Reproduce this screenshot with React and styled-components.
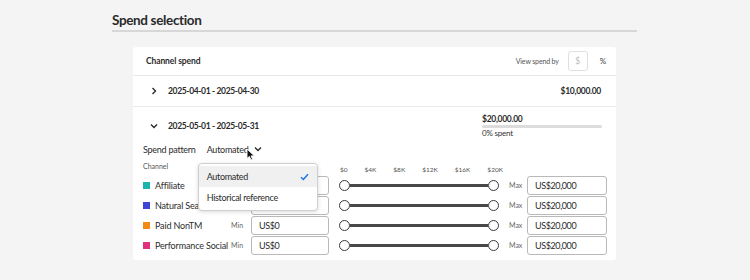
import React from "react";
import styled, { createGlobalStyle } from "styled-components";

const Global = createGlobalStyle`
  html, body { margin: 0; padding: 0; }
  body {
    background: #f4f4f4;
    font-family: Lato, "Open Sans", sans-serif;
    color: #2c2c2c;
    width: 750px;
    height: 280px;
    overflow: hidden;
  }
`;

const Page = styled.div`
  padding: 11px 113px 0 112px;
`;

const Title = styled.h2`
  margin: 0;
  font-size: 13.5px;
  letter-spacing: -0.35px;
  font-weight: 700;
  line-height: 18px;
  padding-bottom: 1px;
  border-bottom: 2px solid #d7d7d7;
  color: #2a2a2a;
`;

const Card = styled.div`
  margin: 15px 21px 0 21px;
  background: #fff;
  border-radius: 3px;
  position: relative;
`;

const CardHeader = styled.div`
  height: 28px;
  display: flex;
  align-items: center;
  padding: 0 10px 0 13px;
  border-bottom: 1px solid #e9e9e9;
`;

const HeaderTitle = styled.div`
  flex: 1;
  font-size: 8.5px;
  letter-spacing: -0.1px;
  font-weight: 700;
`;

const ViewBy = styled.div`
  display: flex;
  align-items: center;
  gap: 9px;
  font-size: 7px;
  letter-spacing: -0.15px;
  color: #555;
`;

const UnitBox = styled.div`
  width: 20px;
  height: 20px;
  box-sizing: border-box;
  border: 1px solid #e0e0e0;
  border-radius: 3px;
  display: flex;
  align-items: center;
  justify-content: center;
  color: #bbb;
  font-size: 8.5px;
`;

const Pct = styled.span`
  margin-left: 3px;
  font-size: 8px;
  color: #444;
`;

const PeriodRow = styled.div`
  height: 30px;
  display: flex;
  align-items: center;
  padding: 0 15px 0 16px;
  border-bottom: 1px solid #e9e9e9;
`;

const Chevron = styled.span`
  width: 10px;
  display: inline-flex;
  align-items: center;
  justify-content: center;
  margin-right: 9px;
`;

const DateText = styled.div`
  flex: 1;
  font-size: 8.5px;
  letter-spacing: -0.35px;
  font-weight: 700;
`;

const Amount = styled.div`
  font-size: 8.5px;
  letter-spacing: -0.3px;
  font-weight: 700;
`;

const Expanded = styled.div`
  padding: 6px 9px 5px 10px;
`;

const ExpandedTop = styled.div`
  display: flex;
  align-items: center;
  padding-left: 6px;
`;

const Budget = styled.div`
  width: 120px;
  margin-right: 5px;
  display: flex;
  flex-direction: column;
`;

const BudgetValue = styled.div`
  font-size: 8.5px;
  letter-spacing: -0.3px;
  font-weight: 700;
  line-height: 12px;
`;

const Bar = styled.div`
  height: 3px;
  background: #dcdcdc;
  border-radius: 2px;
`;

const Spent = styled.div`
  font-size: 8px;
  letter-spacing: -0.2px;
  line-height: 11px;
  color: #333;
`;

const PatternRow = styled.div`
  display: flex;
  align-items: center;
  height: 20px;
  font-size: 9px;
  letter-spacing: -0.25px;
  gap: 11px;
`;

const Picker = styled.div`
  position: relative;
  display: flex;
  align-items: center;
  gap: 5px;
  height: 20px;
`;

const Menu = styled.div`
  position: absolute;
  top: 24px;
  left: -9px;
  width: 118px;
  padding: 2px 0;
  background: #fff;
  border: 1px solid #cfcfcf;
  border-radius: 4px;
  box-shadow: 0 1px 4px rgba(0, 0, 0, 0.15);
  z-index: 5;
`;

const MenuItem = styled.div`
  height: 21px;
  display: flex;
  align-items: center;
  justify-content: space-between;
  padding: 0 8px;
  font-size: 9px;
  letter-spacing: -0.3px;
  background: ${(p) => (p.$active ? "#f0f0f0" : "transparent")};
`;

const Cursor = styled.svg`
  position: absolute;
  left: 39px;
  top: 9px;
  z-index: 6;
`;

const Grid = styled.div`
  display: grid;
  grid-template-columns: 88px 20px 78px 10px 160px 10px 18px 80px;
  align-items: center;
`;

const HeadRow = styled(Grid)`
  height: 16px;
  align-items: end;
`;

const ColLabel = styled.div`
  font-size: 7px;
  color: #555;
  line-height: 10px;
  margin-bottom: 4px;
`;

const Scale = styled.div`
  grid-column: 5;
  display: flex;
  justify-content: space-between;
  margin: 0 -4px 0 1px;
  font-size: 6.5px;
  line-height: 10px;
  color: #555;
`;

const ChannelRow = styled(Grid)`
  height: 20px;
`;

const Name = styled.div`
  display: flex;
  align-items: center;
  gap: 5px;
  font-size: 9px;
  letter-spacing: -0.15px;
  white-space: nowrap;
  overflow: hidden;
`;

const Swatch = styled.span`
  width: 7px;
  height: 7px;
  flex: none;
  background: ${(p) => p.$color};
`;

const SmallLabel = styled.div`
  font-size: 7px;
  color: #666;
  grid-column: ${(p) => p.$col};
`;

const Input = styled.div`
  grid-column: ${(p) => p.$col};
  height: 19px;
  box-sizing: border-box;
  border: 1px solid #b9b9b9;
  border-radius: 3px;
  display: flex;
  align-items: center;
  padding-left: 7px;
  font-size: 9px;
  letter-spacing: -0.4px;
  color: #2c2c2c;
`;

const Slider = styled.div`
  grid-column: 5;
  display: flex;
  align-items: center;
  height: 12px;
`;

const Knob = styled.span`
  width: 11px;
  height: 11px;
  box-sizing: border-box;
  border: 1.6px solid #3a3a3a;
  border-radius: 50%;
  background: #fff;
  flex: none;
`;

const Track = styled.span`
  flex: 1;
  height: 3px;
  background: #484848;
`;

const channels = [
  { name: "Affiliate", color: "#19b6ad" },
  { name: "Natural Search", color: "#3c46d6" },
  { name: "Paid NonTM", color: "#f08a12" },
  { name: "Performance Social", color: "#e0307f" },
];

const ChevronRight = () => (
  <svg width="8" height="8" viewBox="0 0 8 8">
    <path d="M2.5 1 L5.5 4 L2.5 7" fill="none" stroke="#2c2c2c" strokeWidth="1.4" />
  </svg>
);
const ChevronDown = () => (
  <svg width="8" height="8" viewBox="0 0 8 8">
    <path d="M1 2.5 L4 5.5 L7 2.5" fill="none" stroke="#2c2c2c" strokeWidth="1.4" />
  </svg>
);

export default function App() {
  return (
    <>
      <Global />
      <Page>
        <Title>Spend selection</Title>
        <Card>
          <CardHeader>
            <HeaderTitle>Channel spend</HeaderTitle>
            <ViewBy>
              View spend by
              <UnitBox>$</UnitBox>
              <Pct>%</Pct>
            </ViewBy>
          </CardHeader>
          <PeriodRow>
            <Chevron><ChevronRight /></Chevron>
            <DateText>2025-04-01 - 2025-04-30</DateText>
            <Amount>$10,000.00</Amount>
          </PeriodRow>
          <Expanded>
            <ExpandedTop>
              <Chevron><ChevronDown /></Chevron>
              <DateText>2025-05-01 - 2025-05-31</DateText>
              <Budget>
                <BudgetValue>$20,000.00</BudgetValue>
                <Bar />
                <Spent>0% spent</Spent>
              </Budget>
            </ExpandedTop>
            <PatternRow>
              <span>Spend pattern</span>
              <Picker>
                <span>Automated</span>
                <ChevronDown />
                <Cursor width="10" height="13" viewBox="0 0 10 13">
                  <path d="M1 1 L1 10.5 L3.4 8.4 L5 12 L6.6 11.3 L5.1 7.9 L8.4 7.9 Z" fill="#111" stroke="#fff" strokeWidth="0.9" />
                </Cursor>
                <Menu>
                  <MenuItem $active>
                    Automated
                    <svg width="9" height="8" viewBox="0 0 9 8">
                      <path d="M1 4.2 L3.4 6.5 L8 1.2" fill="none" stroke="#1473e6" strokeWidth="1.4" />
                    </svg>
                  </MenuItem>
                  <MenuItem>Historical reference</MenuItem>
                </Menu>
              </Picker>
            </PatternRow>
            <HeadRow>
              <ColLabel>Channel</ColLabel>
              <Scale>
                <span>$0</span>
                <span>$4K</span>
                <span>$8K</span>
                <span>$12K</span>
                <span>$16K</span>
                <span>$20K</span>
              </Scale>
            </HeadRow>
            {channels.map((c) => (
              <ChannelRow key={c.name}>
                <Name>
                  <Swatch $color={c.color} />
                  {c.name}
                </Name>
                <SmallLabel $col={2}>Min</SmallLabel>
                <Input $col={3}>US$0</Input>
                <Slider>
                  <Knob />
                  <Track />
                  <Knob />
                </Slider>
                <SmallLabel $col={7}>Max</SmallLabel>
                <Input $col={8}>US$20,000</Input>
              </ChannelRow>
            ))}
          </Expanded>
        </Card>
      </Page>
    </>
  );
}
